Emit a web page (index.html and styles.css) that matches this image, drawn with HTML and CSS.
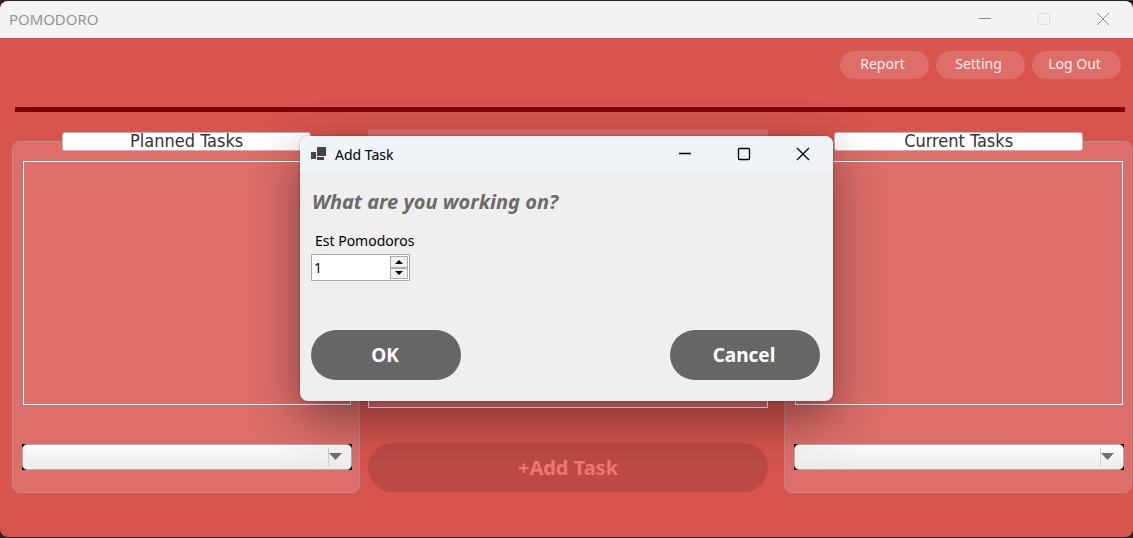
FILE: index.html
```html
<!DOCTYPE html>
<html lang="en">
<head>
<meta charset="utf-8">
<title>POMODORO</title>
<link rel="stylesheet" href="styles.css">
</head>
<body>
<div class="window">
  <header class="titlebar">
    <h1 class="titlebar-text">POMODORO</h1>
    <div class="captions captions-inactive">
      <button class="caption" aria-label="Minimize"><svg width="12" height="12" viewBox="0 0 12 12"><path d="M0 5.5H12"/></svg></button>
      <button class="caption caption-disabled" aria-label="Maximize" disabled><svg width="12" height="12" viewBox="0 0 12 12"><rect x=".5" y=".5" width="11" height="11" rx="1"/></svg></button>
      <button class="caption" aria-label="Close"><svg width="12" height="12" viewBox="0 0 12 12"><path d="M0 0L12 12M12 0L0 12"/></svg></button>
    </div>
  </header>
  <nav class="toolbar">
    <button class="pill">Report</button>
    <button class="pill">Setting</button>
    <button class="pill">Log Out</button>
  </nav>
  <hr class="rule">
  <main class="board">
    <section class="group">
      <h2 class="group-title">Planned Tasks</h2>
      <div class="list"></div>
      <div class="combo">
        <select class="combo-select" aria-label="Planned task"></select>
        <svg class="combo-arrow" width="13" height="7" viewBox="0 0 13 7"><path d="M0 0H13L6.5 7Z"/></svg>
      </div>
    </section>
    <section class="center">
      <div class="detail">
        <div class="detail-body"></div>
      </div>
      <button class="add">+Add Task</button>
    </section>
    <section class="group">
      <h2 class="group-title">Current Tasks</h2>
      <div class="list"></div>
      <div class="combo">
        <select class="combo-select" aria-label="Current task"></select>
        <svg class="combo-arrow" width="13" height="7" viewBox="0 0 13 7"><path d="M0 0H13L6.5 7Z"/></svg>
      </div>
    </section>
  </main>

  <div class="dialog" role="dialog" aria-labelledby="dialog-title">
    <header class="dialog-bar">
      <svg class="dialog-icon" width="16" height="14" viewBox="0 0 16 14"><path d="M6 0H15V9H6ZM0 5H5V12H0ZM6 10H13V13H6Z"/></svg>
      <h2 class="dialog-title" id="dialog-title">Add Task</h2>
      <div class="captions">
        <button class="caption" aria-label="Minimize"><svg width="12" height="12" viewBox="0 0 12 12"><path d="M0 5.5H12"/></svg></button>
        <button class="caption" aria-label="Maximize"><svg width="12" height="12" viewBox="0 0 12 12"><rect x=".5" y=".5" width="11" height="11" rx="1"/></svg></button>
        <button class="caption" aria-label="Close"><svg width="12" height="12" viewBox="0 0 12 12"><path d="M0 0L12 12M12 0L0 12"/></svg></button>
      </div>
    </header>
    <form class="form">
      <input class="task-name" type="text" aria-label="Task name" placeholder="What are you working on?">
      <label class="est-label" for="est">Est Pomodoros</label>
      <div class="spinner">
        <input class="spinner-input" id="est" type="number" value="1" min="1">
        <div class="spinner-buttons">
          <button class="spin" type="button" aria-label="Increase"><svg width="8" height="4" viewBox="0 0 8 4"><path d="M0 4L4 0L8 4Z"/></svg></button>
          <button class="spin" type="button" aria-label="Decrease"><svg width="8" height="4" viewBox="0 0 8 4"><path d="M0 0H8L4 4Z"/></svg></button>
        </div>
      </div>
      <div class="actions">
        <button class="action" type="button">OK</button>
        <button class="action" type="button">Cancel</button>
      </div>
    </form>
  </div>
</div>
</body>
</html>
```

FILE: styles.css
```css
* {
  box-sizing: border-box;
}

body {
  margin: 0;
  padding: 1px 0;
  min-height: 100vh;
  display: flex;
  background: #2b2529;
  font-family: "Noto Sans", "Open Sans", sans-serif;
  font-size: 14px;
}

button,
input,
select {
  font-family: inherit;
  margin: 0;
  padding: 0;
  border: 0;
}

h1,
h2 {
  margin: 0;
  font-weight: 400;
}

.window {
  position: relative;
  flex: 1;
  min-width: 0;
  border-radius: 8px;
  overflow: hidden;
  background: #d8544f;
}

.titlebar {
  display: flex;
  align-items: center;
  justify-content: space-between;
  height: 37px;
  padding-left: 9px;
  background: #f3f3f3;
}

.titlebar-text {
  padding-bottom: 2px;
  font-family: "Open Sans", "Noto Sans", sans-serif;
  font-size: 15px;
  color: #8f8f8f;
}

.captions {
  display: flex;
  align-self: stretch;
}

.caption {
  display: flex;
  align-items: center;
  justify-content: center;
  width: 59px;
  padding-right: 1px;
  padding-bottom: 1px;
  background: none;
  color: #000;
}

.captions-inactive .caption {
  color: #8a8a8a;
}

.captions-inactive .caption-disabled {
  color: #dedede;
}

.caption svg {
  overflow: visible;
  fill: none;
  stroke: currentColor;
  stroke-width: 1;
}

.dialog .caption svg {
  stroke-width: 1.3;
}

.toolbar {
  display: flex;
  justify-content: flex-end;
  gap: 7px;
  padding: 13px 12px 28px;
}

.pill {
  width: 89px;
  height: 28px;
  padding-right: 4px;
  padding-bottom: 3px;
  border-radius: 14px;
  background: #dd6e69;
  color: #fbeeee;
  font-size: 14px;
}

.rule {
  height: 5px;
  margin: 0 8px 0 15px;
  border: 0;
  background: #800000;
}

.board {
  display: grid;
  grid-template-columns: minmax(0, 348fr) minmax(0, 408fr) minmax(0, 348fr);
  gap: 8px;
  padding: 17px 1px 44px 12px;
}

.group {
  margin-top: 12px;
  padding: 0 8px 22px 10px;
  border: 1px solid #b5908e;
  border-radius: 8px;
  background: #dd6e69;
}

.group-title {
  width: 76%;
  height: 19px;
  margin: -10px auto 10px 39px;
  border: 1px solid #c9b3b2;
  border-radius: 3px;
  background: #fff;
  color: #333;
  font-family: "DejaVu Sans Condensed", "DejaVu Sans", sans-serif;
  font-size: 18px;
  line-height: 15px;
  text-align: center;
}

.list {
  height: 244px;
  border: 1px solid #fff;
  outline: 1px solid #a87b7a;
}

.combo {
  position: relative;
  margin: 39px -1px 0;
  background: #000;
}

.combo-select {
  display: block;
  width: 100%;
  height: 26px;
  border: 1px solid #b5adad;
  border-radius: 5px;
  appearance: none;
  background: linear-gradient(#fdfbfc, #ecebe9);
}

.combo-arrow {
  position: absolute;
  right: 10px;
  top: 9px;
  fill: #706e6e;
}

.combo::after {
  content: "";
  position: absolute;
  right: 23px;
  top: 4px;
  bottom: 4px;
  width: 1px;
  background: #d0cdcd;
}

.center {
  display: flex;
  flex-direction: column;
  gap: 35px;
  padding-right: 8px;
}

.detail {
  height: 279px;
  padding-top: 32px;
  background: #dd6e69;
}

.detail-body {
  height: 100%;
  border: 1px solid #fff;
}

.add {
  height: 49px;
  border-radius: 25px;
  background: #bd4a45;
  color: #ef7875;
  font-size: 20px;
  font-weight: 700;
}

.dialog {
  position: absolute;
  left: 0;
  right: 0;
  top: 135px;
  width: 533px;
  margin: 0 auto;
  border-radius: 8px;
  background: #efefef;
  box-shadow: 0 18px 50px rgba(0, 0, 0, 0.42), 0 0 3px rgba(0, 0, 0, 0.3);
}

.dialog-bar {
  display: flex;
  align-items: center;
  height: 36px;
  padding-left: 11px;
  border-radius: 8px 8px 0 0;
  background: #eef3f8;
}

.dialog-icon {
  fill: #444;
}

.dialog-title {
  margin: 0 auto 0 8px;
  font-size: 14px;
}

.form {
  display: flex;
  flex-direction: column;
  align-items: flex-start;
  padding: 17px 13px 21px 11px;
}

.task-name {
  width: 100%;
  height: 27px;
  padding-left: 1px;
  padding-bottom: 2px;
  background: none;
  font-size: 20px;
  font-weight: 700;
  font-style: italic;
}

.task-name::placeholder {
  color: #6b6b6b;
  opacity: 1;
}

.est-label {
  margin: 15px 0 3px 4px;
  font-size: 14px;
  line-height: 20px;
}

.spinner {
  display: flex;
  width: 99px;
  height: 27px;
  padding: 1px;
  border: 1px solid #a9a9a9;
  background: #fff;
}

.spinner-input {
  flex: 1;
  min-width: 0;
  padding-left: 1px;
  padding-bottom: 1px;
  background: none;
  font-size: 14px;
  appearance: textfield;
}

.spinner-input::-webkit-inner-spin-button {
  appearance: none;
}

.spinner-buttons {
  display: grid;
  grid-template-rows: 1fr 1fr;
  width: 18px;
}

.spin {
  display: flex;
  align-items: center;
  justify-content: center;
  border: 1px solid #adadad;
  background: #f0f0f0;
}

.actions {
  display: flex;
  justify-content: space-between;
  align-self: stretch;
  margin-top: 49px;
}

.action {
  width: 150px;
  height: 50px;
  padding-right: 2px;
  border-radius: 25px;
  background: #666;
  color: #fff;
  font-size: 19px;
  font-weight: 700;
}
```
